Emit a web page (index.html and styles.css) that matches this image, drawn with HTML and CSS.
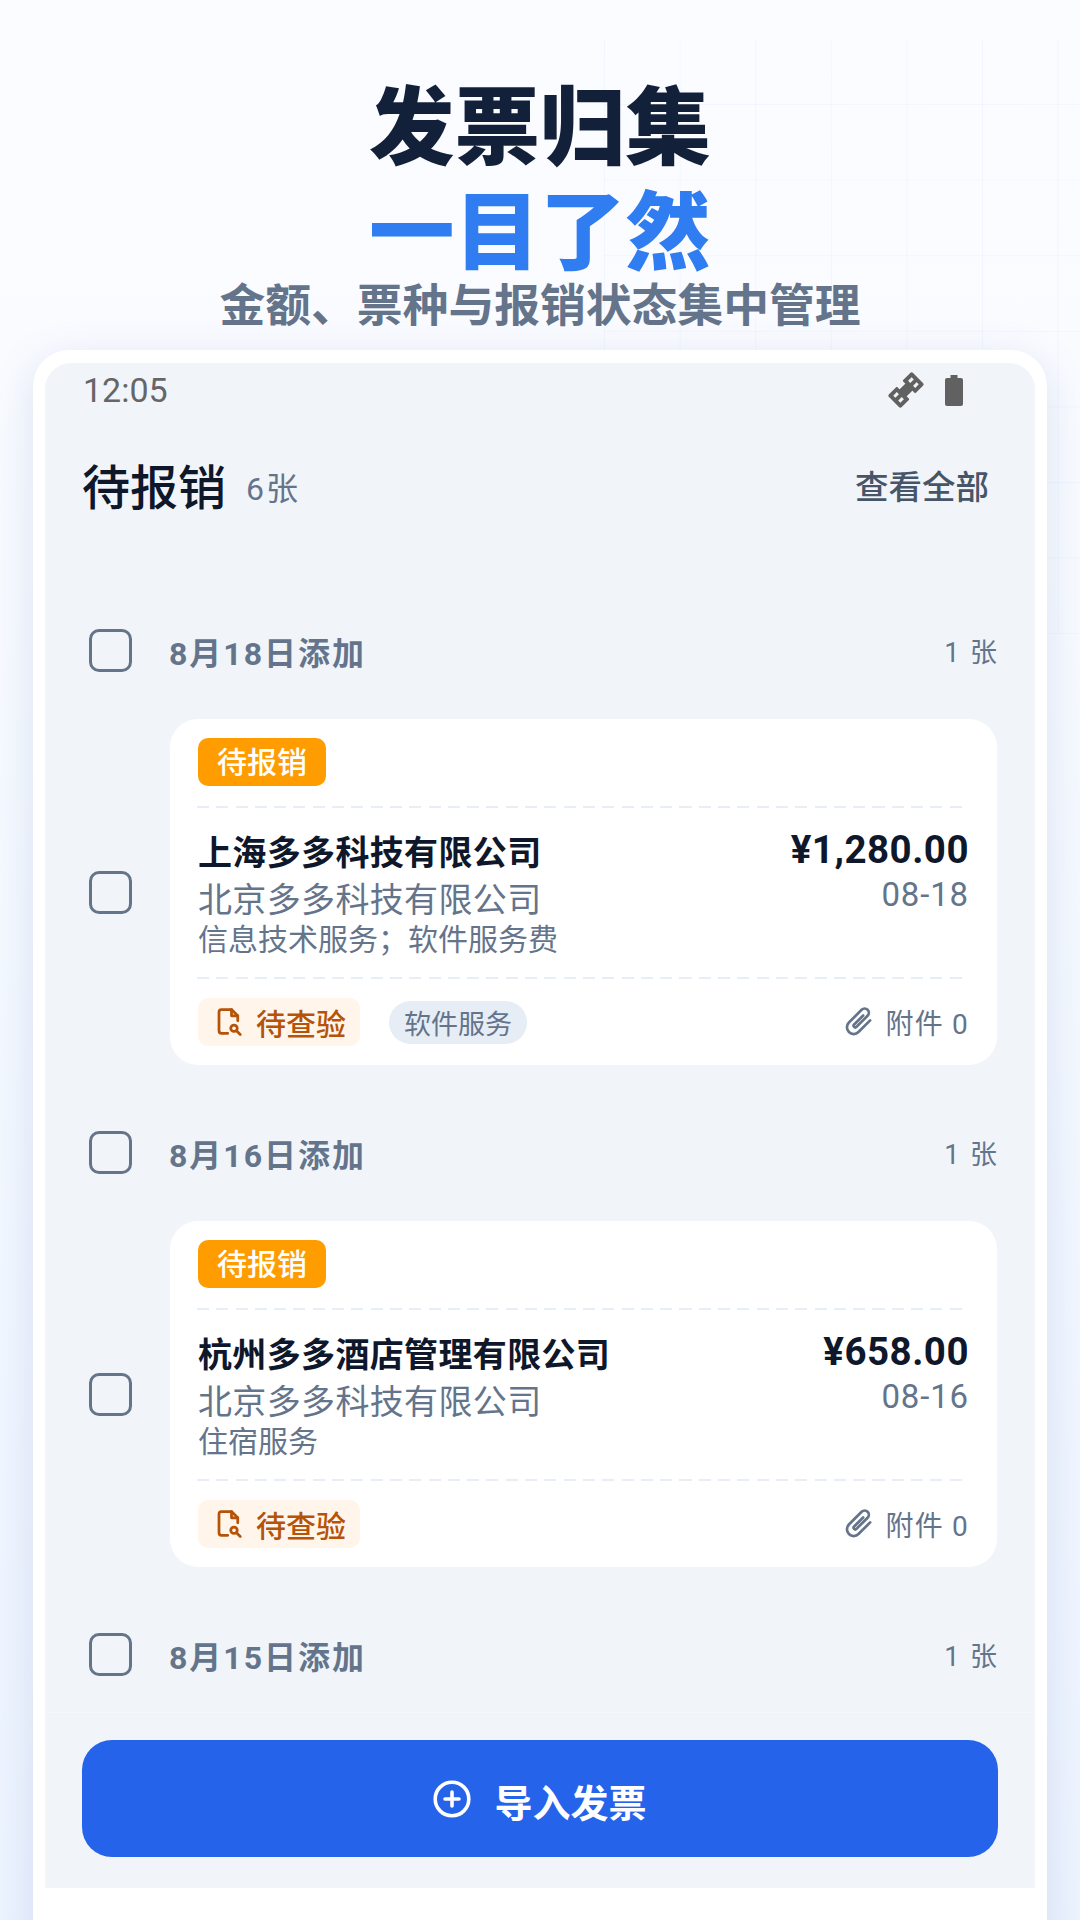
FILE: index.html
```html
<!DOCTYPE html>
<html lang="zh-CN">
<head>
<meta charset="utf-8">
<title>发票归集</title>
<link rel="stylesheet" href="styles.css">
</head>
<body>
<div class="grid-deco"></div>
<header class="hero">
  <h1 class="hero-title">发票归集</h1>
  <h2 class="hero-accent">一目了然</h2>
  <p class="hero-sub">金额、票种与报销状态集中管理</p>
</header>
<main class="phone">
  <div class="screen">
    <div class="status">
      <span class="clock">12:05</span>
      <span class="status-icons">
        <svg class="sat" viewBox="0 0 36 36" width="36" height="36"><g transform="rotate(-45 18 18)" fill="#616161"><path fill-rule="evenodd" d="M1 11a2 2 0 0 1 2-2h10a1 1 0 0 1 1 1v16a1 1 0 0 1-1 1H3a2 2 0 0 1-2-2zM5 13v3h5v-3zM5 20v3h5v-3z"/><rect x="13" y="13" width="10" height="10"/><path fill-rule="evenodd" d="M35 11a2 2 0 0 0-2-2H23a1 1 0 0 0-1 1v16a1 1 0 0 0 1 1h10a2 2 0 0 0 2-2zM31 13v3h-5v-3zM31 20v3h-5v-3z"/></g></svg>
        <svg class="bat" viewBox="0 0 18 31" width="18" height="31"><path fill="#616161" d="M5.500 0h7v3H16a2 2 0 0 1 2 2v24a2 2 0 0 1-2 2H2a2 2 0 0 1-2-2V5a2 2 0 0 1 2-2h3.500z"/></svg>
      </span>
    </div>
    <div class="title-row">
      <div class="title-left"><span class="page-title">待报销</span><span class="page-count">6张</span></div>
      <span class="view-all">查看全部</span>
    </div>
    <div class="list">
      <section class="group">
        <div class="group-head"><span class="check"></span><span class="date">8月18日添加</span><span class="num">1 张</span></div>
        <div class="row">
          <span class="check"></span>
          <article class="card">
            <span class="tag">待报销</span>
            <div class="dash dash-top"></div>
            <div class="body">
              <div class="body-left">
                <div class="seller">上海多多科技有限公司</div>
                <div class="buyer">北京多多科技有限公司</div>
                <div class="kind">信息技术服务；软件服务费</div>
              </div>
              <div class="body-right">
                <div class="amount">¥1,280.00</div>
                <div class="day">08-18</div>
              </div>
            </div>
            <div class="dash"></div>
            <div class="foot">
              <span class="verify"><svg viewBox="0 0 24 24" width="30" height="30" fill="none" stroke="#b45309" stroke-width="2.2" stroke-linejoin="round" stroke-linecap="round"><path d="M11 21H6a2 2 0 0 1-2-2V4a2 2 0 0 1 2-2h8l5 5v4"/><path d="M14 2v5h5"/><circle cx="16" cy="17" r="2.600"/><path d="M18 19l3 3"/></svg>待查验</span>
              <span class="chip">软件服务</span>
              <span class="attach"><svg viewBox="0 0 24 24" width="36" height="36" fill="none" stroke="#64748b" stroke-width="1.800" stroke-linecap="round" stroke-linejoin="round"><path transform="rotate(45 12 12)" d="M16.500 6v11a4.500 4.500 0 0 1-9 0V5a2.800 2.800 0 0 1 5.600 0v10.500a1.100 1.100 0 0 1-2.200 0V7"/></svg>附件 0</span>
            </div>
          </article>
        </div>
      </section>
      <section class="group">
        <div class="group-head"><span class="check"></span><span class="date">8月16日添加</span><span class="num">1 张</span></div>
        <div class="row">
          <span class="check"></span>
          <article class="card">
            <span class="tag">待报销</span>
            <div class="dash dash-top"></div>
            <div class="body">
              <div class="body-left">
                <div class="seller">杭州多多酒店管理有限公司</div>
                <div class="buyer">北京多多科技有限公司</div>
                <div class="kind">住宿服务</div>
              </div>
              <div class="body-right">
                <div class="amount">¥658.00</div>
                <div class="day">08-16</div>
              </div>
            </div>
            <div class="dash"></div>
            <div class="foot">
              <span class="verify"><svg viewBox="0 0 24 24" width="30" height="30" fill="none" stroke="#b45309" stroke-width="2.2" stroke-linejoin="round" stroke-linecap="round"><path d="M11 21H6a2 2 0 0 1-2-2V4a2 2 0 0 1 2-2h8l5 5v4"/><path d="M14 2v5h5"/><circle cx="16" cy="17" r="2.600"/><path d="M18 19l3 3"/></svg>待查验</span>
              <span class="attach"><svg viewBox="0 0 24 24" width="36" height="36" fill="none" stroke="#64748b" stroke-width="1.800" stroke-linecap="round" stroke-linejoin="round"><path transform="rotate(45 12 12)" d="M16.500 6v11a4.500 4.500 0 0 1-9 0V5a2.800 2.800 0 0 1 5.600 0v10.500a1.100 1.100 0 0 1-2.200 0V7"/></svg>附件 0</span>
            </div>
          </article>
        </div>
      </section>
      <section class="group">
        <div class="group-head"><span class="check"></span><span class="date">8月15日添加</span><span class="num">1 张</span></div>
      </section>
    </div>
    <div class="actions">
      <button class="import"><svg viewBox="0 0 38 38" width="38" height="38" fill="none" stroke="#fff" stroke-width="3.600" stroke-linecap="round"><circle cx="19" cy="19" r="16.800"/><path d="M19 12v14M12 19h14"/></svg><span class="import-label">导入发票</span></button>
    </div>
  </div>
</main>
</body>
</html>
```
FILE: styles.css
```css
* { box-sizing: border-box; }
html, body { margin: 0; padding: 0; }
body {
  width: 1080px;
  height: 1920px;
  overflow: hidden;
  position: relative;
  font-family: Roboto, "Noto Sans CJK SC", sans-serif;
  background: linear-gradient(180deg, #fbfcff 0%, #f8fbff 30%, #edf4ff 100%);
}
.grid-deco {
  position: absolute;
  left: 604px;
  top: 39px;
  width: 476px;
  height: 595px;
  background-image:
    linear-gradient(to right, rgba(96, 140, 240, .05) 1px, transparent 1px),
    linear-gradient(to bottom, rgba(96, 140, 240, .05) 1px, transparent 1px);
  background-size: 75.6px 75.6px;
  background-position: 0 -10.6px;
}
.hero { position: relative; display: flex; flex-direction: column; align-items: center; padding-top: 69px; font-family: "Noto Sans CJK SC", sans-serif; }
.hero-title, .hero-accent, .hero-sub { margin: 0; }
.hero-title { font-size: 85.500px; line-height: 105px; font-weight: 900; color: #12203a; }
.hero-accent { font-size: 85.500px; line-height: 105px; font-weight: 900; color: #2f7df0; }
.hero-sub { font-size: 45.800px; line-height: 46px; font-weight: 700; color: #64748b; }
.phone {
  position: relative;
  margin: 25px 33px 0;
  height: 1650px;
  padding: 13px 12px 0;
  background: #fff;
  border-radius: 36px 36px 0 0;
  box-shadow: 0 10px 44px rgba(70, 100, 170, .16);
}
.screen {
  height: 1525px;
  background: #f1f5f9;
  border-radius: 26px 26px 0 0;
  display: flex;
  flex-direction: column;
  overflow: hidden;
}
.status { height: 54px; display: flex; align-items: center; justify-content: space-between; padding: 0 72px 0 38px; }
.clock { font-size: 34px; color: #666; }
.status-icons { display: flex; align-items: center; gap: 21px; }
.sat, .bat { display: block; }
.title-row { display: flex; align-items: center; justify-content: space-between; padding: 0 46px 0 37px; margin-top: 33px; height: 68px; }
.title-left { display: flex; align-items: center; gap: 20px; }
.page-title { font-size: 48px; font-weight: 500; color: #0f172a; }
.page-count { font-size: 32px; letter-spacing: 2px; color: #64748b; padding-top: 4px; }
.view-all { font-size: 33.500px; font-weight: 500; color: #475569; }
.list { flex: 1; padding: 111px 38px 0 44px; display: flex; flex-direction: column; gap: 66px; }
.group-head { height: 43px; display: flex; align-items: center; }
.check { width: 43px; height: 43px; flex: none; border: 3.500px solid #64748b; border-radius: 10px; }
.date { margin-left: 37px; font-size: 32px; font-weight: 700; letter-spacing: 2px; color: #64748b; }
.num { margin-left: auto; margin-right: -2px; font-size: 27px; letter-spacing: 2px; color: #64748b; }
.row { display: flex; align-items: center; margin-top: 47px; }
.card {
  margin-left: 38px;
  width: 827px;
  height: 346px;
  background: #fff;
  border-radius: 28px;
  padding: 19px 28px 0;
  display: flex;
  flex-direction: column;
}
.tag { align-self: flex-start; width: 128px; height: 48px; line-height: 50px; text-align: center; border-radius: 10px; background: #ff9d00; color: #fff; font-size: 30px; font-weight: 500; }
.dash {
  flex: none;
  height: 2px;
  margin: 0 6px 0 -1px;
  background: repeating-linear-gradient(90deg, #e8eef5 0 12px, transparent 12px 19.300px);
}
.dash-top { margin-top: 20px; }
.body { height: 169px; padding-top: 22px; display: flex; justify-content: space-between; }
.body-left { display: flex; flex-direction: column; }
.seller { font-size: 34px; line-height: 46px; font-weight: 700; letter-spacing: .35px; color: #0f172a; }
.buyer { font-size: 34px; line-height: 48px; letter-spacing: .35px; color: #64748b; }
.kind { font-size: 30px; line-height: 32px; color: #64748b; }
.body-right { display: flex; flex-direction: column; align-items: flex-end; margin-top: -3px; }
.amount { font-size: 38.500px; line-height: 46px; font-weight: 700; letter-spacing: .5px; color: #0f172a; }
.day { font-size: 33px; line-height: 44px; letter-spacing: .85px; color: #64748b; }
.foot { display: flex; align-items: center; margin-top: 19px; }
.verify { height: 48px; width: 162px; padding-left: 16px; border-radius: 10px; background: #fff5ea; color: #b45309; font-size: 30px; font-weight: 500; display: flex; align-items: center; gap: 12px; }
.chip { margin-left: 29px; height: 43px; width: 138px; border-radius: 22px; background: #e6edf5; color: #64748b; font-size: 27px; display: flex; align-items: center; justify-content: center; }
.attach { margin-left: auto; display: flex; align-items: center; gap: 9px; font-size: 28px; letter-spacing: 1.200px; color: #64748b; }
.actions { height: 176px; border-top: 1px solid #f4f7fb; padding: 27px 37px 0; }
.import {
  width: 916px;
  height: 117px;
  border: 0;
  border-radius: 30px;
  background: #2563eb;
  color: #fff;
  font: 700 38px "Noto Sans CJK SC", sans-serif;
  display: flex;
  align-items: center;
  justify-content: center;
  gap: 23px;
}
.import-label { padding-top: 3px; }
```
